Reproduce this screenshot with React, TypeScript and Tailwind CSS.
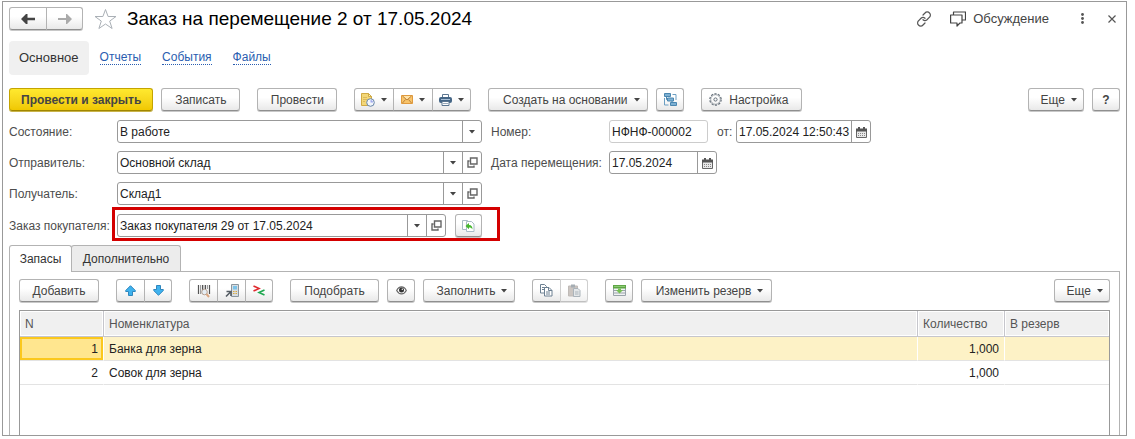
import React, { ReactNode, useState } from "react";
import clsx from "clsx";

interface Item {
    id: number;
    name: string;
    quantity: string;
    reserve: string;
}

interface ButtonProps {
    children: ReactNode;
    label?: string;
    className?: string;
    tone?: keyof typeof tones;
}

const items: Item[] = [
    { id: 1, name: "Банка для зерна", quantity: "1,000", reserve: "" },
    { id: 2, name: "Совок для зерна", quantity: "1,000", reserve: "" },
];

const links = ["Отчеты", "События", "Файлы"];

const tones = {
    normal: "border-[#b3b3b3] border-b-[#8f8f8f] from-white from-40% to-[#e9e9e9] text-[#444] shadow-[0_1px_0_#c8c8c8]",
    primary: "border-[#c4a400] border-b-[#a08600] from-[#ffe92e] to-[#f0c800] font-bold text-[#444] shadow-[0_1px_0_#c9b44a]",
    disabled: "border-[#cfcfcf] border-b-[#c0c0c0] from-white from-40% to-[#f0f0f0] shadow-[0_1px_0_#e0e0e0]",
};

function Caret() {
    return (
        <svg width="6" height="4" viewBox="0 0 6 4" className="shrink-0" aria-hidden="true">
            <path d="M0 0h6L3 3.5z" fill="#444" />
        </svg>
    );
}

function Button({ children, label, className, tone = "normal" }: ButtonProps) {
    return (
        <button
            type="button"
            aria-label={label}
            disabled={tone === "disabled"}
            className={clsx(
                "flex h-[23px] shrink-0 items-center justify-center rounded-[3px] border bg-linear-to-b whitespace-nowrap",
                tones[tone],
                className
            )}
        >
            {children}
        </button>
    );
}

function Group({ children }: { children: ReactNode }) {
    return (
        <div className="flex *:not-first:-ml-px *:not-first:rounded-l-none *:not-last:rounded-r-none">
            {children}
        </div>
    );
}

function OpenIcon() {
    return (
        <svg width="11" height="11" viewBox="0 0 11 11" fill="none" stroke="#666" strokeWidth="1.4" aria-hidden="true">
            <path d="M3.5 1h6.5v6H3.5zM2.5 4H1v6h6V8.500" />
        </svg>
    );
}

function CalendarIcon() {
    return (
        <svg width="11" height="11" viewBox="0 0 11 11" className="mt-px" aria-hidden="true">
            <path d="M.5 2.5h10v8H.5z" fill="#e8e8e8" stroke="#666" />
            <path d="M0 1.5h11v3H0zM2 0h2v2H2zM7 0h2v2H7z" fill="#555" />
            <path d="M2 6.500h7M2 8.500h7" stroke="#888" strokeDasharray="1 1" />
        </svg>
    );
}

function ReportIcon() {
    return (
        <svg width="14" height="14" viewBox="0 0 14 14" aria-hidden="true">
            <path d="M.5 .5h7l3 3v9H.5z" fill="#f3d778" stroke="#d0aa45" />
            <path d="M7.5 .5v3h3z" fill="#fff1b8" stroke="#d0aa45" />
            <path d="M2 4.5h4M2 6.5h4M2 8.5h2" stroke="#dcb95a" />
            <circle cx="9.5" cy="9.5" r="3.8" fill="#f2f6fb" stroke="#6785a8" />
            <path d="M9.5 9.5V7A2.5 2.5 0 0 1 12 9.5z" fill="#9fa8ee" />
        </svg>
    );
}

function MailIcon() {
    return (
        <svg width="12" height="9" viewBox="0 0 12 9" aria-hidden="true">
            <path d="M.5 .5h11v8H.5z" fill="#f8c46a" stroke="#e09a3e" />
            <path d="M2 1h8L6 4.500z" fill="#ffe3a8" />
            <path d="M1.500 1L6 5l4.500-4M1.500 8L4.500 4.500M10.500 8L7.500 4.500" fill="none" stroke="#b67c38" strokeWidth=".9" />
        </svg>
    );
}

function PrintIcon() {
    return (
        <svg width="13" height="12" viewBox="0 0 13 12" aria-hidden="true">
            <path d="M3.5 .5h6v3h-6z" fill="#fff" stroke="#5b7691" />
            <rect y="3" width="13" height="6" rx="2" fill="#456686" />
            <path d="M2 5.5h9" stroke="#a8bfd6" />
            <path d="M3 7.5h7v4H3z" fill="#fff" stroke="#5b7691" />
            <path d="M4 9.5h5" stroke="#9ab" />
        </svg>
    );
}

function StructureIcon() {
    return (
        <svg width="13" height="13" viewBox="0 0 13 13" aria-hidden="true">
            <path d="M.5 5v7h4M8.500 1.500h3.500V7" fill="none" stroke="#6c9fc2" />
            <path d="M.5 .5h6v3h-6zM3.500 5h6v3h-6zM6.500 9.500h6v3h-6z" fill="#7db0d2" stroke="#4a86b0" />
            <path d="M2.500 3.500v3h1M8 8v1.500" fill="none" stroke="#4a86b0" />
        </svg>
    );
}

function GearIcon() {
    return (
        <svg width="13" height="13" viewBox="0 0 13 13" fill="none" stroke="#66707a" aria-hidden="true">
            <circle cx="6.5" cy="6.5" r="5.700" strokeWidth="1.2" strokeDasharray="2.2 1.38" />
            <circle cx="6.5" cy="6.5" r="4.800" strokeWidth=".6" />
            <circle cx="6.5" cy="6.5" r="1.6" />
        </svg>
    );
}

function ArrowIcon({ down }: { down?: boolean }) {
    return (
        <svg width="11" height="11" viewBox="0 0 11 11" className={down ? "rotate-180" : undefined} aria-hidden="true">
            <path d="M5.5 .7L10.300 5.500v1H7.500v4h-4v-4H.700v-1z" fill="#3fb2ee" stroke="#2f86bd" strokeLinejoin="round" />
        </svg>
    );
}

function BarcodeIcon() {
    return (
        <svg width="14" height="14" viewBox="0 0 14 14" aria-hidden="true">
            <path d="M1.500 1v9M5.500 1v9M8.500 1v4M12.500 1v9" stroke="#555" strokeWidth="1.2" />
            <path d="M3.500 1v9M7 1v4M10.500 1v4" stroke="#888" strokeWidth=".8" />
            <circle cx="7.5" cy="8" r="2.800" fill="#e6eef5" stroke="#b5a294" />
            <path d="M9.500 10l2.500 3" stroke="#dba782" strokeWidth="2" />
        </svg>
    );
}

function TerminalIcon() {
    return (
        <svg width="14" height="14" viewBox="0 0 14 14" aria-hidden="true">
            <path d="M6.5 .5h7v12h-7z" fill="#d8dde1" stroke="#8a969f" />
            <path d="M8 2h4v3.500H8z" fill="#7cc3ea" />
            <path d="M8 7.500h4M8 9.500h4" stroke="#dba93c" strokeDasharray="1 .5" />
            <path d="M1 12.500l4.500-4.500M1.500 7.500H6V12" fill="none" stroke="#555d64" strokeWidth="1.6" />
        </svg>
    );
}

function CompareIcon() {
    return (
        <svg width="12" height="11" viewBox="0 0 12 11" fill="none" strokeWidth="1.6" aria-hidden="true">
            <path d="M.5 1l5.500 2.500L.5 6" stroke="#e02a2e" />
            <path d="M11.500 5L6 7.500l5.500 2.500" stroke="#1fa850" />
        </svg>
    );
}

function EyeIcon() {
    return (
        <svg width="11" height="9" viewBox="0 0 11 9" aria-hidden="true">
            <path d="M.700 4.500C3-.3 8-.3 10.300 4.500 8 9 3 9 .700 4.500z" fill="#fff" stroke="#666" strokeWidth="1.2" />
            <circle cx="5.500" cy="4" r="2.500" fill="#333" />
            <circle cx="6.300" cy="3.300" r=".7" fill="#fff" />
        </svg>
    );
}

function CopyIcon() {
    return (
        <svg width="13" height="13" viewBox="0 0 13 13" stroke="#6c8092" aria-hidden="true">
            <path d="M.5 .5h4l2 2V9h-6z" fill="#fff" />
            <path d="M2 3.500h3M2 5.500h2" />
            <path d="M4.500 3.500H9l3 3v5.500H4.500z" fill="#fff" />
            <path d="M8.500 3.500v3H12M6 8h4M6 10h4" fill="none" />
        </svg>
    );
}

function PasteIcon() {
    return (
        <svg width="13" height="13" viewBox="0 0 13 13" aria-hidden="true">
            <path d="M.5 2h9v10h-9z" fill="#cbc5c1" stroke="#bfbab7" />
            <path d="M3 .5h4v3H3z" fill="#a5adb3" />
            <path d="M5.500 4.500H10l2 2v6H5.500z" fill="#e4e7e9" stroke="#aab3ba" />
            <path d="M7 8h3.500M7 10h3.500" stroke="#aab3ba" />
        </svg>
    );
}

function ReserveIcon() {
    return (
        <svg width="13" height="11" viewBox="0 0 13 11" aria-hidden="true">
            <path d="M.5 .5h12v10H.5z" fill="#f0f2f3" stroke="#9aa3aa" />
            <path d="M1 5.500h11M1 8h11" stroke="#9aa3aa" />
            <path d="M0 0h13v3.500H0z" fill="#5fa646" />
            <path d="M1 1.500h11" stroke="#8ccb72" />
            <path d="M5 3.500h3V5h2L6.500 8.500 3 5h2z" fill="#76c153" />
        </svg>
    );
}

function FillIcon() {
    return (
        <svg width="13" height="12" viewBox="0 0 13 12" aria-hidden="true">
            <path d="M.5 .5h5v9h-5z" fill="#fff" stroke="#a9bac6" />
            <path d="M4.500 1.500h5l2.500 2.500v7.500H4.500z" fill="#fff" stroke="#a9bac6" />
            <path d="M3.500 6L7 3v2c2.500 0 3.500 1.500 3.500 4.500C9.500 8 9 7.500 7 7.500v1.800z" fill="#45b62e" />
        </svg>
    );
}

interface ComboProps {
    id: string;
    label: string;
    value: string;
    open?: boolean;
    children?: ReactNode;
}

function Combo({ id, label, value, open = true, children }: ComboProps) {
    return (
        <div className="flex items-center">
            <label htmlFor={id} className="w-[108px] shrink-0 whitespace-nowrap text-[#4d4d4d]">{label}</label>
            <div className="flex h-[23px] flex-1 rounded-[3px] border border-[#999] bg-white">
                <div className="relative flex-1">
                    <select id={id} defaultValue={value} className="h-full w-full appearance-none pl-[2px] text-[#222] outline-none">
                        <option>{value}</option>
                    </select>
                    <span className="pointer-events-none absolute inset-y-0 right-0 flex w-[19px] items-center justify-center border-l border-[#999]">
                        <Caret />
                    </span>
                </div>
                {open &&
                    <button type="button" aria-label="Открыть" className="flex w-[19px] items-center justify-center border-l border-[#999]">
                        <OpenIcon />
                    </button>
                }
            </div>
            {children}
        </div>
    );
}

function DateField({ id, value, className }: { id: string; value: string; className: string }) {
    return (
        <div className={clsx("flex h-[23px] rounded-[3px] border border-[#999] bg-white", className)}>
            <input id={id} type="text" defaultValue={value} className="min-w-0 flex-1 pl-[2px] text-[#222] outline-none" />
            <button type="button" aria-label="Календарь" className="flex w-[19px] shrink-0 items-center justify-center border-l border-[#999]">
                <CalendarIcon />
            </button>
        </div>
    );
}

export default function App() {
    const [selected, setSelected] = useState(1);

    return (
        <div className="flex min-h-screen bg-white pt-px pr-2 pb-[3px] pl-[2px] font-['Liberation_Sans',Arial,sans-serif] text-[12px] leading-4 text-[#333]">
            <main className="flex flex-1 flex-col border border-[#999] px-[6px]">
                <header className="mt-1 flex h-[25px] items-center">
                    <Group>
                        <Button label="Назад" className="w-[38px]">
                            <svg width="14" height="10" viewBox="0 0 14 10" aria-hidden="true">
                                <path d="M0 5l5-5h1.500v3.800H14v2.400H6.500V10H5z" fill="#444" />
                            </svg>
                        </Button>
                        <Button label="Вперед" className="w-[37px]">
                            <svg width="14" height="10" viewBox="0 0 14 10" aria-hidden="true">
                                <path d="M14 5L9 0H8v4H0v2h8v4h1z" fill="#aaa" />
                            </svg>
                        </Button>
                    </Group>
                    <button type="button" aria-label="В избранное" className="ml-[11px]">
                        <svg width="23" height="22" viewBox="0 0 23 22" fill="none" stroke="#aab0b6" aria-hidden="true">
                            <path d="M11.5 1.500l2.600 7H22l-6.300 4.600 2.400 7.400-6.600-4.500-6.600 4.500 2.400-7.400L1 8.500h7.900z" />
                        </svg>
                    </button>
                    <h1 className="ml-[10px] text-[19px] leading-6 whitespace-nowrap text-black">Заказ на перемещение 2 от 17.05.2024</h1>
                    <div className="ml-auto flex items-center text-[13px] text-[#444]">
                        <button type="button" aria-label="Ссылка">
                            <svg width="16" height="16" viewBox="0 0 16 16" fill="none" stroke="#555" strokeWidth="1.2" strokeLinecap="round" aria-hidden="true">
                                <path d="M7 4l2-2a2.900 2.900 0 0 1 4.500 0 2.900 2.900 0 0 1 0 4.200L11 8.700a2.900 2.900 0 0 1-4 0M9 12l-2 2a2.900 2.900 0 0 1-4.500 0 2.900 2.900 0 0 1 0-4.200L5 7.300a2.900 2.900 0 0 1 4 0" />
                            </svg>
                        </button>
                        <button type="button" className="ml-[18px] flex items-center gap-[7px]">
                            <svg width="16" height="16" viewBox="0 0 16 16" fill="none" stroke="#444" strokeWidth="1.2" strokeLinejoin="round" aria-hidden="true">
                                <path d="M.6 4h11.400v8H10l-3 3v-3H.600z" />
                                <path d="M3.500 4V1h12v8H12" />
                            </svg>
                            Обсуждение
                        </button>
                        <button type="button" aria-label="Меню" className="ml-8">
                            <svg width="3" height="11" viewBox="0 0 3 11" fill="#555" aria-hidden="true">
                                <circle cx="1.5" cy="1.5" r="1.4" />
                                <circle cx="1.5" cy="5.5" r="1.4" />
                                <circle cx="1.5" cy="9.5" r="1.4" />
                            </svg>
                        </button>
                        <button type="button" aria-label="Закрыть" className="mr-1 ml-6">
                            <svg width="8" height="8" viewBox="0 0 8 8" stroke="#555" strokeWidth="1.2" aria-hidden="true">
                                <path d="M.5 .5l7 7M7.500 .5l-7 7" />
                            </svg>
                        </button>
                    </div>
                </header>

                <nav className="mt-[10px] flex h-[34px] items-center gap-[11px]">
                    <span className="flex h-full items-center rounded bg-[#f0f0f0] px-[10px] text-[13px]">Основное</span>
                    <div className="flex gap-[21px]">
                        {links.map(link =>
                            <a key={link} href="#" className="border-b border-dotted border-[#2a5db0] leading-[13px] text-[#2a5db0]">{link}</a>
                        )}
                    </div>
                </nav>

                <div className="mt-[13px] flex items-center">
                    <Button tone="primary" className="px-[11px]">Провести и закрыть</Button>
                    <Button className="ml-2 min-w-[79px] px-3">Записать</Button>
                    <Button className="ml-[17px] min-w-[80px] px-3">Провести</Button>
                    <div className="ml-[17px]">
                        <Group>
                            <Button label="Отчеты" className="w-10 gap-[6px]"><ReportIcon /><Caret /></Button>
                            <Button label="Отправить" className="w-10 gap-[6px]"><MailIcon /><Caret /></Button>
                            <Button label="Печать" className="w-[39px] gap-[6px]"><PrintIcon /><Caret /></Button>
                        </Group>
                    </div>
                    <Button className="ml-[17px] min-w-[160px] gap-[6px] pr-[6px] pl-3">Создать на основании<Caret /></Button>
                    <Button label="Структура подчиненности" className="ml-2 w-7"><StructureIcon /></Button>
                    <Button className="ml-[17px] min-w-[101px] gap-[7px] pr-3 pl-[6px]"><GearIcon />Настройка</Button>
                    <Button className="ml-auto gap-[6px] pr-[6px] pl-3">Еще<Caret /></Button>
                    <Button label="Справка" className="ml-2 w-7 font-bold">?</Button>
                </div>

                <form className="mt-[9px] flex gap-[9px]">
                    <div className="flex w-[473px] shrink-0 flex-col gap-2">
                        <Combo id="state" label="Состояние:" value="В работе" open={false} />
                        <Combo id="sender" label="Отправитель:" value="Основной склад" />
                        <Combo id="receiver" label="Получатель:" value="Склад1" />
                        <div className="relative mt-px">
                            <Combo id="order" label="Заказ покупателя:" value="Заказ покупателя 29 от 17.05.2024">
                                <Button label="Заполнить по заказу" className="ml-[9px] w-[27px]"><FillIcon /></Button>
                            </Combo>
                            <div className="pointer-events-none absolute -top-[7px] -right-[18px] -bottom-1 left-[103px] border-3 border-[#d40000]" />
                        </div>
                    </div>
                    <div className="flex flex-col gap-2">
                        <div className="flex items-center">
                            <label htmlFor="number" className="w-[118px] text-[#4d4d4d]">Номер:</label>
                            <input id="number" type="text" readOnly value="НФНФ-000002" className="h-[23px] w-[99px] rounded-[3px] border border-[#ccc] pl-[2px] text-[#222] outline-none" />
                            <label htmlFor="date" className="w-7 pl-[9px] text-[#4d4d4d]">от:</label>
                            <DateField id="date" value="17.05.2024 12:50:43" className="w-[135px]" />
                        </div>
                        <div className="flex items-center">
                            <label htmlFor="move-date" className="w-[118px] whitespace-nowrap text-[#4d4d4d]">Дата перемещения:</label>
                            <DateField id="move-date" value="17.05.2024" className="w-[108px]" />
                        </div>
                    </div>
                </form>

                <section className="mt-2 flex flex-1 flex-col">
                    <div role="tablist" className="flex h-[26px]">
                        <button type="button" role="tab" aria-selected="true" className="z-10 -mb-px min-w-[63px] rounded-t-[3px] border border-b-0 border-[#b3b3b3] bg-white px-[9px]">Запасы</button>
                        <button type="button" role="tab" aria-selected="false" className="-ml-px min-w-[110px] rounded-t-[3px] border border-b-0 border-[#b3b3b3] bg-[#ececec] px-[9px]">Дополнительно</button>
                    </div>
                    <div className="flex flex-1 flex-col border border-b-0 border-[#b3b3b3] px-[9px] pt-[7px]">
                        <div className="flex items-center">
                            <Button className="min-w-[80px] px-3">Добавить</Button>
                            <div className="ml-[17px]">
                                <Group>
                                    <Button label="Вверх" className="w-[29px]"><ArrowIcon /></Button>
                                    <Button label="Вниз" className="w-7"><ArrowIcon down /></Button>
                                </Group>
                            </div>
                            <div className="ml-[17px]">
                                <Group>
                                    <Button label="Штрихкод" className="w-[29px]"><BarcodeIcon /></Button>
                                    <Button label="Терминал" className="w-[29px]"><TerminalIcon /></Button>
                                    <Button label="Сравнить" className="w-7"><CompareIcon /></Button>
                                </Group>
                            </div>
                            <Button className="ml-[17px] min-w-[89px] px-3">Подобрать</Button>
                            <Button label="Просмотр" className="ml-2 w-7"><EyeIcon /></Button>
                            <Button className="ml-2 min-w-[92px] gap-[6px] pr-[6px] pl-3">Заполнить<Caret /></Button>
                            <div className="ml-[17px]">
                                <Group>
                                    <Button label="Копировать" className="w-[29px]"><CopyIcon /></Button>
                                    <Button label="Вставить" tone="disabled" className="w-7"><PasteIcon /></Button>
                                </Group>
                            </div>
                            <Button label="Резерв" className="ml-[17px] w-7"><ReserveIcon /></Button>
                            <Button className="ml-2 min-w-[131px] gap-[6px] pr-[6px] pl-3">Изменить резерв<Caret /></Button>
                            <Button className="ml-auto gap-[6px] pr-[6px] pl-3">Еще<Caret /></Button>
                        </div>

                        <div className="mt-2 flex-1 border border-b-0 border-[#999]">
                            <table className="w-full table-fixed border-separate border-spacing-0">
                                <thead>
                                    <tr className="h-[26px] text-left text-[#555] *:border-b *:border-[#c6c6cc] *:bg-[#f0f0f0] *:px-[5px] *:font-normal *:shadow-[inset_0_0_0_1px_#fff] *:not-last:border-r">
                                        <th className="w-[84px]">N</th>
                                        <th>Номенклатура</th>
                                        <th className="w-[87px]">Количество</th>
                                        <th className="w-[104px]">В резерв</th>
                                    </tr>
                                </thead>
                                <tbody>
                                    {items.map(item =>
                                        <tr
                                            key={item.id}
                                            onClick={() => setSelected(item.id)}
                                            className={clsx(
                                                "h-6 text-[#222] *:border-b *:border-b-[#e3e3e3] *:px-[5px] *:not-last:border-r *:not-last:border-r-white",
                                                item.id === selected && "*:bg-[#fdf2c6]"
                                            )}
                                        >
                                            <td className={clsx("text-right", item.id === selected && "bg-[#ffe68f]! shadow-[inset_0_0_0_2px_#fbc81e]")}>{item.id}</td>
                                            <td>{item.name}</td>
                                            <td className="text-right">{item.quantity}</td>
                                            <td>{item.reserve}</td>
                                        </tr>
                                    )}
                                </tbody>
                            </table>
                        </div>
                    </div>
                </section>
            </main>
        </div>
    );
}
